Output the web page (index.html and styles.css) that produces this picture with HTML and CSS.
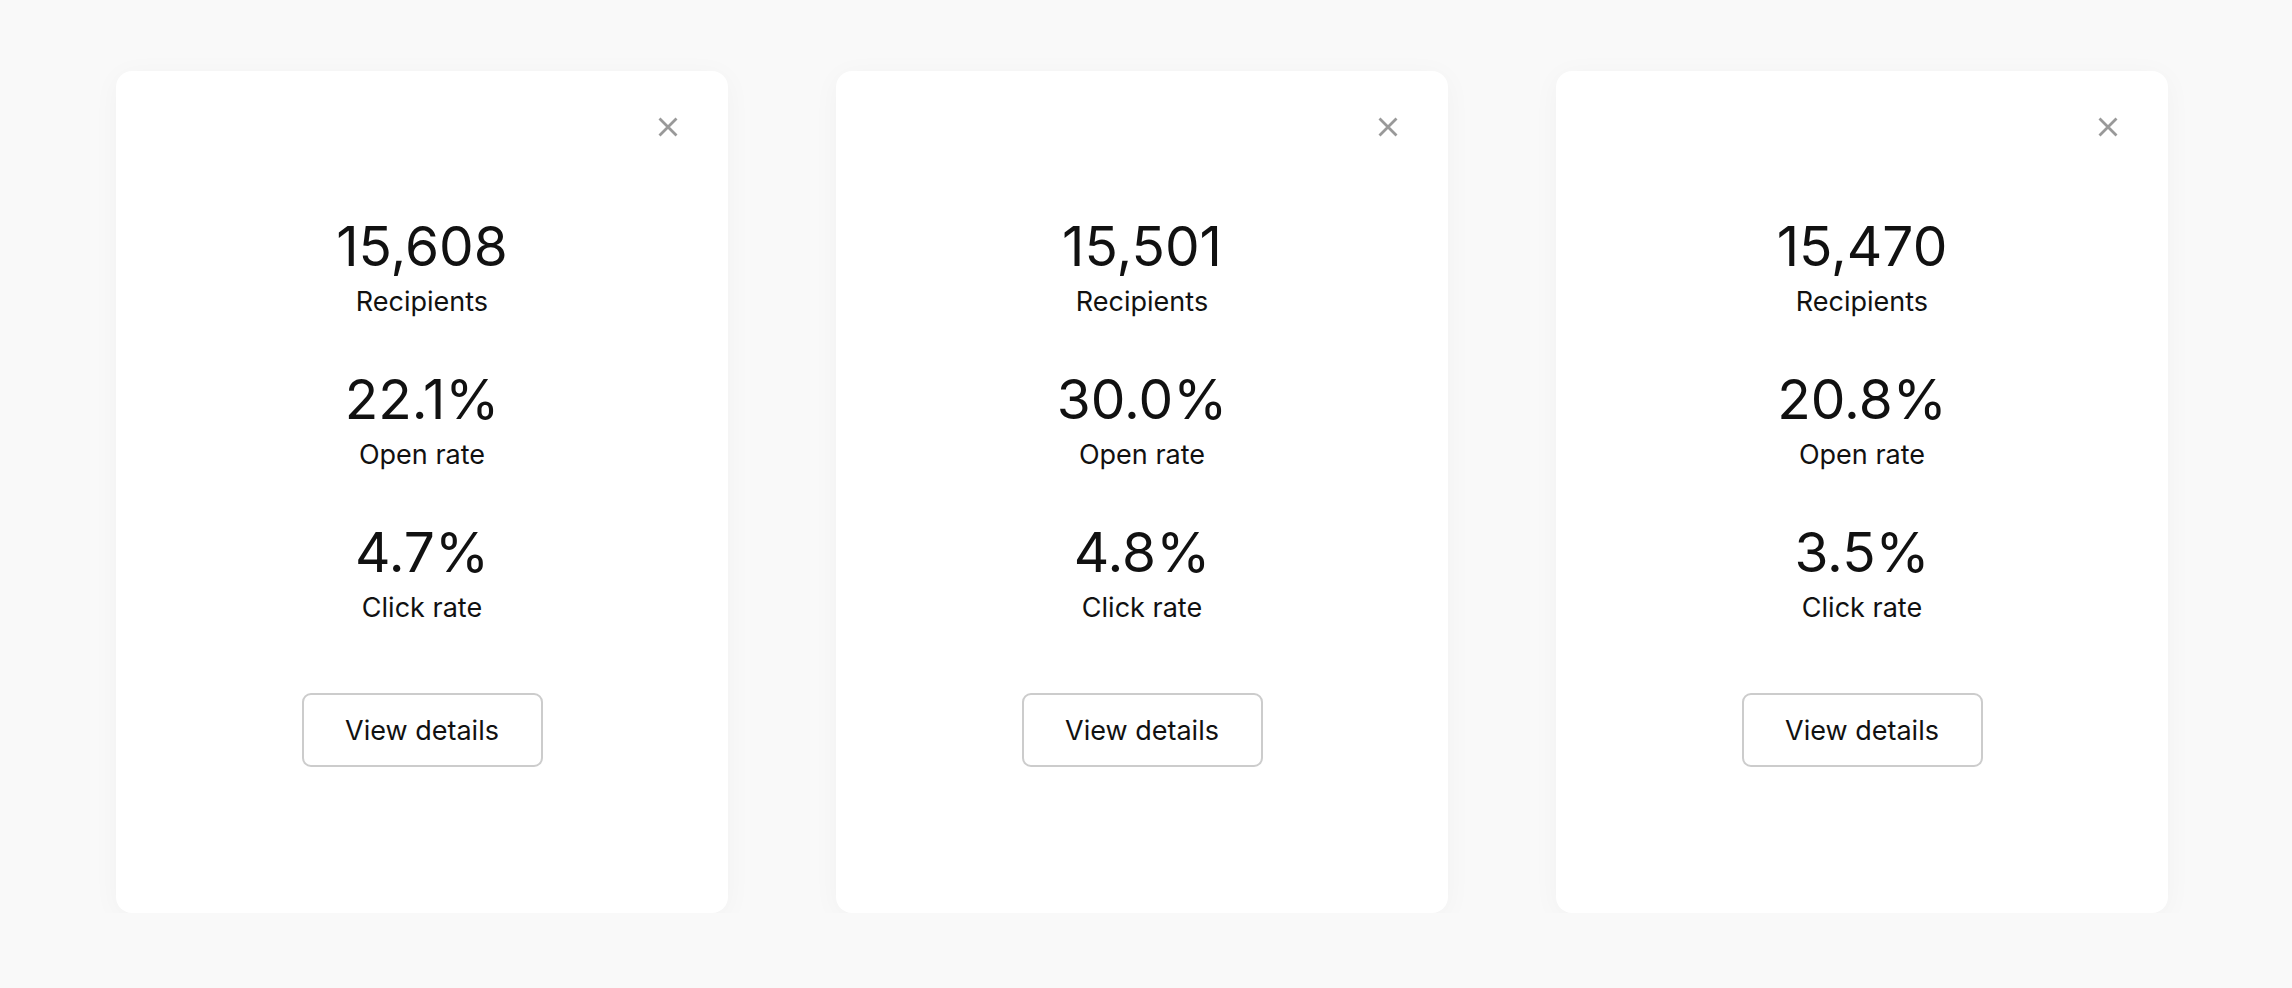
FILE: index.html
```html
<!DOCTYPE html>
<html lang="en">
<head>
<meta charset="utf-8">
<title>Campaign stats</title>
<link rel="stylesheet" href="styles.css">
</head>
<body>
<main class="cards">
  <section class="card">
    <button class="close" aria-label="Close"><svg viewBox="0 0 20 20" width="20" height="20"><path d="M1.5 1.5L18.5 18.5M18.5 1.5L1.5 18.5" /></svg></button>
    <div class="stat"><div class="value">15,608</div><div class="label">Recipients</div></div>
    <div class="stat"><div class="value">22.1%</div><div class="label">Open rate</div></div>
    <div class="stat"><div class="value">4.7%</div><div class="label">Click rate</div></div>
    <button class="details">View details</button>
  </section>
  <section class="card">
    <button class="close" aria-label="Close"><svg viewBox="0 0 20 20" width="20" height="20"><path d="M1.5 1.5L18.5 18.5M18.5 1.5L1.5 18.5" /></svg></button>
    <div class="stat"><div class="value">15,501</div><div class="label">Recipients</div></div>
    <div class="stat"><div class="value">30.0%</div><div class="label">Open rate</div></div>
    <div class="stat"><div class="value">4.8%</div><div class="label">Click rate</div></div>
    <button class="details">View details</button>
  </section>
  <section class="card">
    <button class="close" aria-label="Close"><svg viewBox="0 0 20 20" width="20" height="20"><path d="M1.5 1.5L18.5 18.5M18.5 1.5L1.5 18.5" /></svg></button>
    <div class="stat"><div class="value">15,470</div><div class="label">Recipients</div></div>
    <div class="stat"><div class="value">20.8%</div><div class="label">Open rate</div></div>
    <div class="stat"><div class="value">3.5%</div><div class="label">Click rate</div></div>
    <button class="details">View details</button>
  </section>
</main>
</body>
</html>
```
FILE: styles.css
```css
html, body {
  margin: 0;
  padding: 0;
  background: #f9f9f9;
  font-family: Inter, "Liberation Sans", sans-serif;
  color: #111;
}

.cards {
  display: grid;
  grid-template-columns: repeat(3, 612px);
  column-gap: 108px;
  padding: 71px 0 0 116px;
}

.card {
  position: relative;
  background: #fff;
  border-radius: 16px;
  box-shadow: 0 4px 28px rgba(0, 0, 0, 0.035);
  display: flex;
  flex-direction: column;
  align-items: center;
  padding: 145px 0 146px;
  gap: 51px;
}

.close {
  position: absolute;
  top: 46px;
  right: 50px;
  width: 20px;
  height: 20px;
  padding: 0;
  border: 0;
  background: none;
  display: block;
}

.close svg {
  display: block;
}

.close path {
  stroke: #999;
  stroke-width: 2.8;
  fill: none;
}

.stat {
  display: flex;
  flex-direction: column;
  align-items: center;
  gap: 10px;
}

.value {
  font-size: 55px;
  line-height: 60px;
  font-weight: 400;
}

.label {
  font-size: 27px;
  line-height: 32px;
}

.details {
  margin-top: 18px;
  width: 241px;
  height: 74px;
  border: 2px solid #cccccc;
  border-radius: 9px;
  background: #fff;
  font-family: inherit;
  font-size: 27px;
  color: #111;
  padding: 0;
}
```
